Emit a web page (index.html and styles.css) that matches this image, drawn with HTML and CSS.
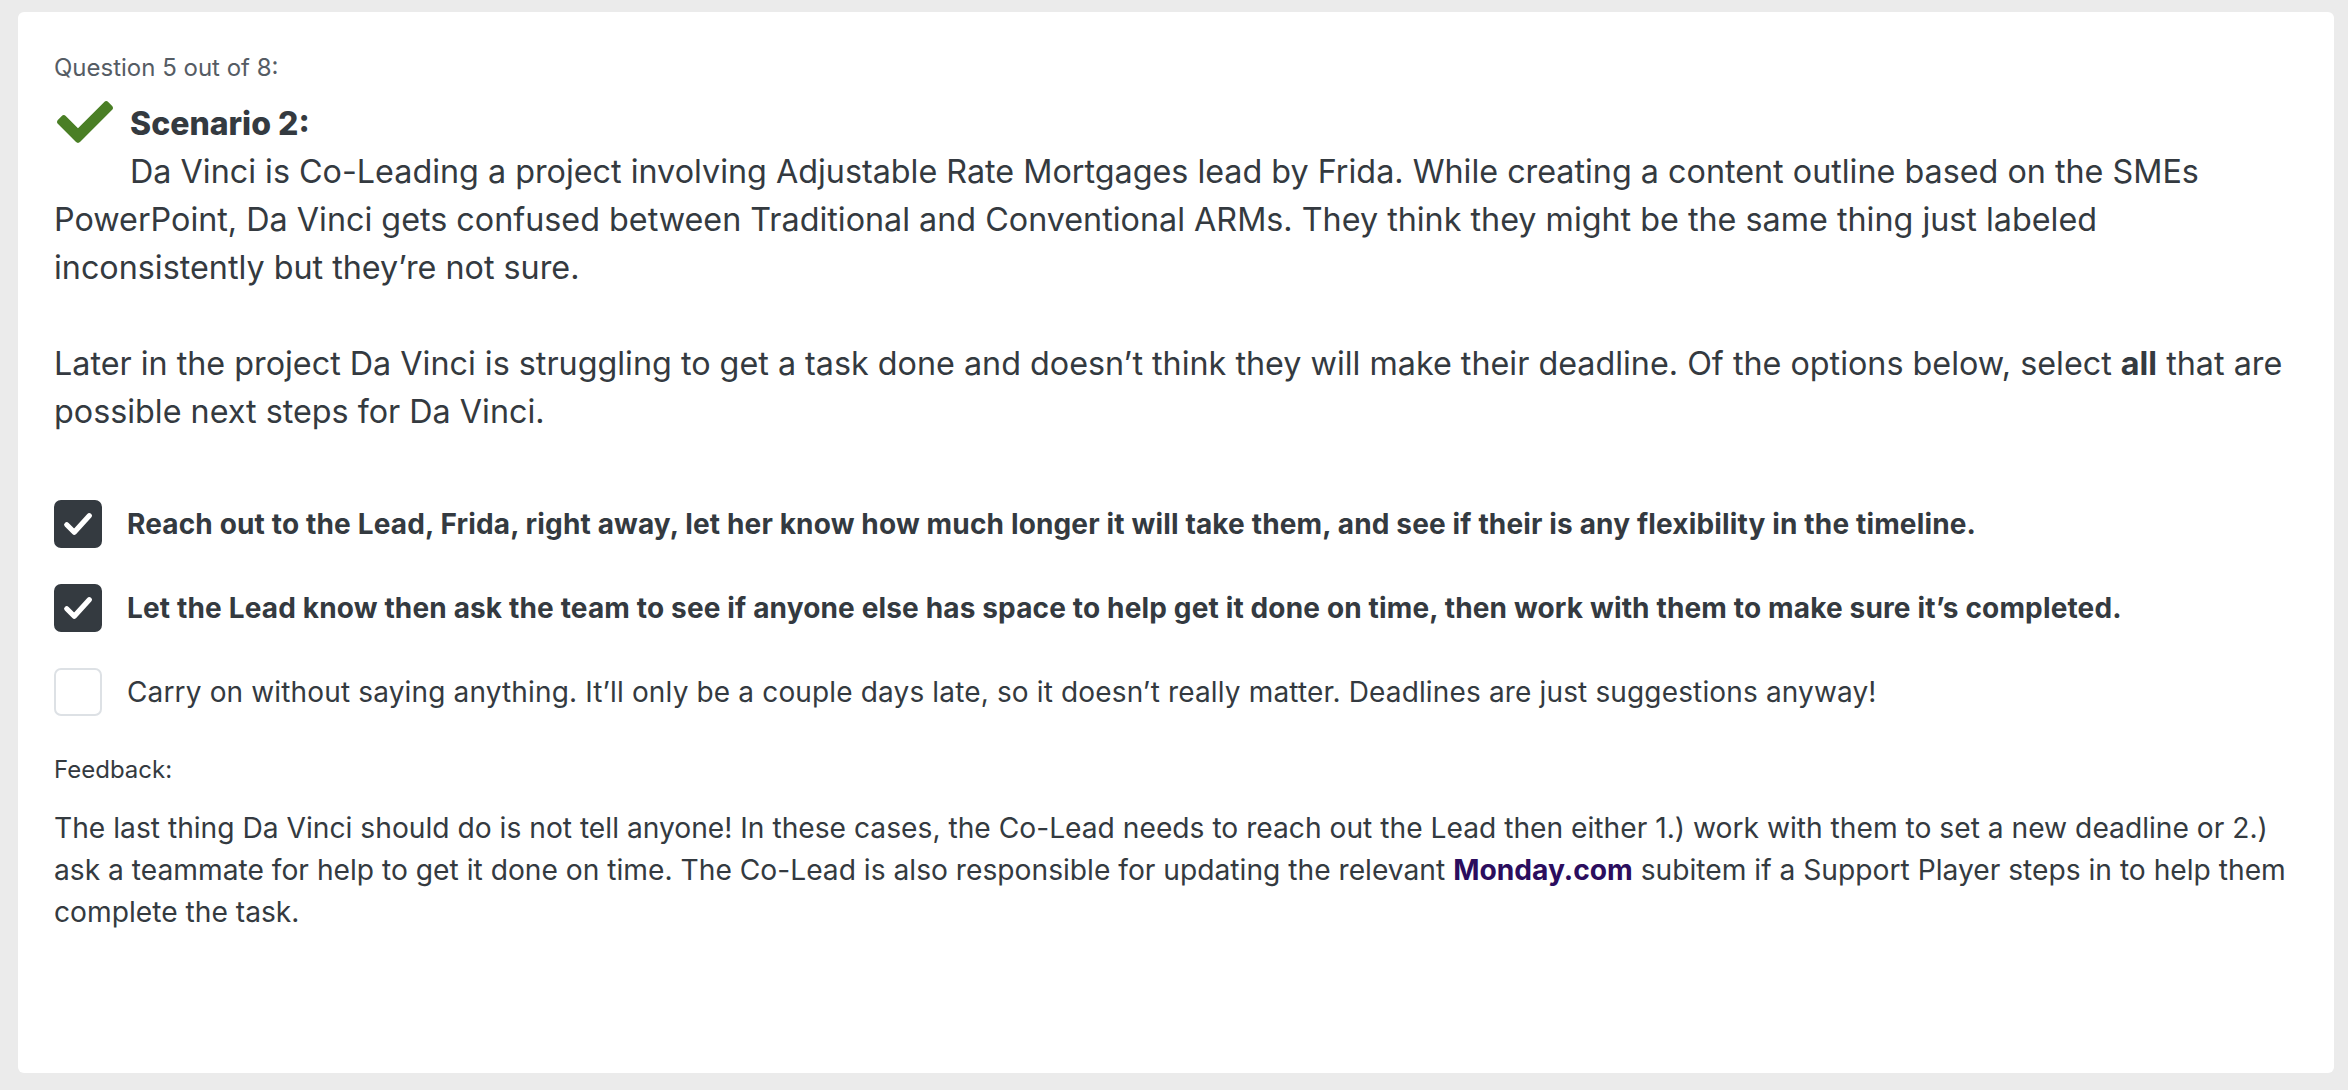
FILE: index.html
```html
<!DOCTYPE html>
<html lang="en">
<head>
<meta charset="utf-8">
<title>Question 5 out of 8</title>
<link rel="stylesheet" href="styles.css">
</head>
<body>
<main class="card">
  <p class="qnum">Question 5 out of 8:</p>
  <div class="title-row">
    <svg class="result-icon" viewBox="0 56 512 400" aria-hidden="true"><path fill="currentColor" d="M173.898 439.404l-166.4-166.4c-9.997-9.997-9.997-26.206 0-36.204l36.203-36.204c9.997-9.998 26.207-9.998 36.204 0L192 312.69 432.095 72.596c9.997-9.997 26.207-9.997 36.204 0l36.203 36.204c9.997 9.997 9.997 26.206 0 36.204l-294.4 294.401c-9.998 9.997-26.207 9.997-36.204-.001z"/></svg>
    <h2 class="title">Scenario 2:</h2>
  </div>
  <p class="prompt indent">Da Vinci is Co-Leading a project involving Adjustable Rate Mortgages lead by Frida. While creating a content outline based on the SMEs PowerPoint, Da Vinci gets confused between Traditional and Conventional ARMs. They think they might be the same thing just labeled inconsistently but they’re not sure.</p>
  <p class="prompt gap">Later in the project Da Vinci is struggling to get a task done and doesn’t think they will make their deadline. Of the options below, select <b>all</b> that are possible next steps for Da Vinci.</p>

  <ul class="options">
    <li class="option selected">
      <span class="box"><svg viewBox="0 0 24 24" aria-hidden="true"><path d="M4.5 12.5l5 5L19.5 6.5"/></svg></span>
      <span class="label">Reach out to the Lead, Frida, right away, let her know how much longer it will take them, and see if their is any flexibility in the timeline.</span>
    </li>
    <li class="option selected">
      <span class="box"><svg viewBox="0 0 24 24" aria-hidden="true"><path d="M4.5 12.5l5 5L19.5 6.5"/></svg></span>
      <span class="label">Let the Lead know then ask the team to see if anyone else has space to help get it done on time, then work with them to make sure it’s completed.</span>
    </li>
    <li class="option">
      <span class="box"></span>
      <span class="label">Carry on without saying anything. It’ll only be a couple days late, so it doesn’t really matter. Deadlines are just suggestions anyway!</span>
    </li>
  </ul>

  <p class="fb-label">Feedback:</p>
  <p class="feedback">The last thing Da Vinci should do is not tell anyone! In these cases, the Co-Lead needs to reach out the Lead then either 1.) work with them to set a new deadline or 2.) ask a teammate for help to get it done on time. The Co-Lead is also responsible for updating the relevant <b class="brand">Monday.com</b> subitem if a Support Player steps in to help them complete the task.</p>
</main>
</body>
</html>
```
FILE: styles.css
```css
html, body {
  margin: 0;
  height: 100%;
}
body {
  background: #ebebeb;
  font-family: Inter, "Noto Sans", sans-serif;
  color: #343a40;
  padding: 12px 14px 17px 18px;
  box-sizing: border-box;
}
.card {
  background: #fff;
  border-radius: 6px;
  height: 1061px;
  box-sizing: border-box;
  padding: 30px 26px 0 36px;
}
p { margin: 0; }
.qnum {
  font-size: 24px;
  line-height: 52px;
  color: #555c64;
}
.title-row {
  display: flex;
  align-items: center;
  height: 48px;
  margin-top: 6px;
}
.result-icon {
  width: 56px;
  height: 44px;
  color: #4a7f25;
  margin: -5px 17px 0 3px;
  flex: none;
}
.title {
  margin: 0;
  font-size: 32px;
  font-weight: 800;
  line-height: 48px;
}
.prompt {
  font-size: 32.3px;
  line-height: 48px;
}
.indent { text-indent: 76px; }
.gap { margin-top: 48px; }
.prompt b { font-weight: 700; }
.options {
  list-style: none;
  margin: 64px 0 0;
  padding: 0;
  display: flex;
  flex-direction: column;
  gap: 36px;
}
.option {
  display: flex;
  align-items: center;
  gap: 25px;
  height: 48px;
}
.box {
  width: 48px;
  height: 48px;
  box-sizing: border-box;
  border-radius: 7px;
  border: 2px solid #dde1e5;
  background: #fff;
  flex: none;
  display: flex;
  align-items: center;
  justify-content: center;
}
.selected .box {
  background: #343a40;
  border-color: #343a40;
}
.box svg {
  width: 36px;
  height: 36px;
  fill: none;
  stroke: #fff;
  stroke-width: 3.5;
  stroke-linecap: round;
  stroke-linejoin: round;
}
.label {
  font-size: 28px;
  line-height: 48px;
  letter-spacing: 0.15px;
}
.selected .label { font-weight: 700; }
.fb-label {
  font-size: 24px;
  line-height: 38px;
  margin-top: 35px;
}
.feedback {
  font-size: 28.2px;
  line-height: 42px;
  margin-top: 18px;
}
.brand {
  color: #2b0d5e;
  font-weight: 700;
}
```
